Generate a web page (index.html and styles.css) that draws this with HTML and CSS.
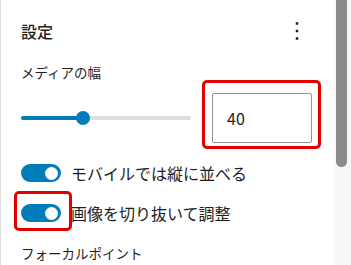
FILE: index.html
```html
<!DOCTYPE html>
<html lang="ja">
<head>
<meta charset="utf-8">
<title>設定</title>
<link rel="stylesheet" href="styles.css">
</head>
<body>
<div class="frame">
  <div class="panel">
    <div class="header">
      <h2 class="title">設定</h2>
      <span class="kebab">
        <svg viewBox="0 0 24 24" width="30" height="30" aria-hidden="true"><path d="M13 19h-2v-2h2v2zm0-6h-2v-2h2v2zm0-6h-2V5h2v2z" fill="#1e1e1e"/></svg>
      </span>
    </div>
    <div class="label">メディアの幅</div>
    <div class="width-row">
      <div class="slider">
        <div class="fill" style="width:62px"></div>
        <div class="knob" style="left:55px"></div>
      </div>
      <div class="input-wrap">
        <div class="num">40</div>
        <span class="highlight hl-input"></span>
      </div>
    </div>
    <div class="toggle-row">
      <span class="toggle-wrap"><span class="toggle"><span class="toggle-thumb"></span></span></span>
      <span class="toggle-label">モバイルでは縦に並べる</span>
    </div>
    <div class="toggle-row">
      <span class="toggle-wrap"><span class="toggle"><span class="toggle-thumb"></span></span><span class="highlight hl-toggle"></span></span>
      <span class="toggle-label">画像を切り抜いて調整</span>
    </div>
    <div class="label label-focal">フォーカルポイント</div>
  </div>
  <div class="scroll-track"><div class="scroll-thumb"></div></div>
</div>
</body>
</html>
```
FILE: styles.css
```css
html, body {
  margin: 0;
  padding: 0;
  background: #ffffff;
}
body {
  width: 351px;
  height: 265px;
  overflow: hidden;
  font-family: "Noto Sans CJK JP", "Noto Sans", sans-serif;
  color: #1e1e1e;
}
.frame {
  display: flex;
  height: 265px;
}
.panel {
  flex: 1;
  border-left: 1px solid #dcdcdc;
  padding: 0 21px 0 20px;
  box-sizing: border-box;
  display: flex;
  flex-direction: column;
}
.header {
  height: 48px;
  padding-top: 13px;
  box-sizing: border-box;
  display: flex;
  align-items: center;
  justify-content: space-between;
  margin-bottom: 14px;
}
.title {
  margin: 0;
  font-size: 16px;
  font-weight: 500;
  line-height: 24px;
}
.kebab {
  display: flex;
  margin-right: 0;
}
.label {
  font-size: 13.5px;
  line-height: 20px;
  height: 20px;
}
.width-row {
  margin-top: 11px;
  height: 50px;
  display: flex;
  align-items: center;
}
.slider {
  position: relative;
  width: 170px;
  height: 4px;
  border-radius: 2px;
  background: #dddddd;
}
.fill {
  height: 4px;
  border-radius: 2px;
  background: #007cba;
}
.knob {
  position: absolute;
  top: -5px;
  width: 14px;
  height: 14px;
  border-radius: 50%;
  background: #007cba;
}
.input-wrap {
  position: relative;
  margin-left: 21px;
}
.num {
  width: 100px;
  height: 50px;
  box-sizing: border-box;
  border: 1px solid #949494;
  border-radius: 2px;
  padding-left: 14px;
  font-size: 16px;
  line-height: 48px;
}
.highlight {
  position: absolute;
  border: 3px solid #e20000;
  border-radius: 5px;
  box-sizing: border-box;
}
.hl-input {
  left: -10px;
  top: -13px;
  width: 119px;
  height: 69px;
}
.toggle-row {
  height: 40px;
  display: flex;
  align-items: center;
}
.width-row + .toggle-row {
  margin-top: 10px;
}
.toggle-wrap {
  position: relative;
  display: flex;
}
.toggle {
  position: relative;
  width: 40px;
  height: 18px;
  border-radius: 9px;
  background: #007cba;
}
.toggle-thumb {
  position: absolute;
  right: 3px;
  top: 2.5px;
  width: 13px;
  height: 13px;
  border-radius: 50%;
  background: #ffffff;
}
.hl-toggle {
  left: -7px;
  top: -13px;
  width: 58px;
  height: 40px;
}
.toggle-label {
  margin-left: 10px;
  font-size: 16px;
  line-height: 24px;
  margin-top: -1px;
}
.label-focal {
  margin-top: 10px;
}
.scroll-track {
  width: 18px;
  background: #f8f8f8;
}
.scroll-thumb {
  margin-left: 3px;
  width: 11px;
  height: 167px;
  background: #8b8b8b;
  border-radius: 0 0 6px 6px;
}
```
